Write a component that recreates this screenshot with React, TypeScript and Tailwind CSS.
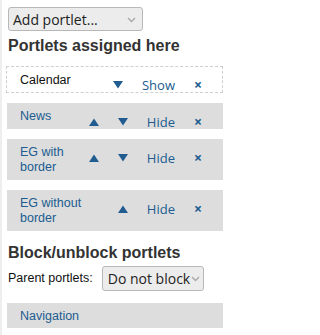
import React from 'react'

type Portlet = {
  name: string
  up?: boolean
  down?: boolean
  action: 'Show' | 'Hide'
}

const portlets: Portlet[] = [
  { name: 'Calendar', down: true, action: 'Show' },
  { name: 'News', up: true, down: true, action: 'Hide' },
  { name: 'EG with border', up: true, down: true, action: 'Hide' },
  { name: 'EG without border', up: true, action: 'Hide' },
]

const ArrowUp = () => (
  <svg width="10" height="8" viewBox="0 0 10 8" className="block">
    <path d="M5 0.5L10 8H0z" fill="#205c90" />
  </svg>
)

const ArrowDown = () => (
  <svg width="10" height="8" viewBox="0 0 10 8" className="block">
    <path d="M0 0H10L5 7.5z" fill="#205c90" />
  </svg>
)

const Chevron = () => (
  <svg width="9" height="6" viewBox="0 0 9 6" className="block">
    <path d="M1 1L4.5 4.5L8 1" fill="none" stroke="#a8a8a8" strokeWidth="1.4" />
  </svg>
)

function PortletRow({ item }: { item: Portlet }) {
  const hidden = item.action === 'Show'
  return (
    <div
      className={
        hidden
          ? 'flex items-start border border-dashed border-[#cfcfcf] bg-white pl-[13px] pr-[20px]'
          : 'ml-px flex items-start bg-[#dddddd] pl-[13px] pr-[21px]'
      }
    >
      <div
        className={`min-w-0 flex-1 text-[12.5px] leading-[15px] font-['Liberation_Sans',Arial,sans-serif] ${
          hidden ? 'pt-[6px] pb-[4px] text-[#111111]' : 'pt-[6px] pb-[5px] text-[#205c90]'
        }`}
      >
        {item.name}
      </div>
      <div
        className={`ml-[10px] flex h-[14px] shrink-0 items-center gap-[19px] text-[#205c90] font-['Open_Sans',sans-serif] ${
          hidden ? 'mt-[11px]' : 'mt-[12px]'
        }`}
      >
        {item.up && <ArrowUp />}
        {item.down && <ArrowDown />}
        <span className="text-[13px] leading-[14px]">{item.action}</span>
        <span className="text-[14px] leading-[14px] font-bold">×</span>
      </div>
    </div>
  )
}

export default function App() {
  return (
    <div className="min-h-[335px] w-[233px] border-l-2 border-[#eeeeee] bg-white pt-[7px] pl-[4px] pr-[10px] font-['Liberation_Sans',Arial,sans-serif]">
      <div className="ml-[2px] flex h-[24px] w-[135px] items-center justify-between rounded-[3px] border border-[#b8b8b8] bg-[#ececec] pl-[4px] pr-[6px] pt-[1px]">
        <span className="text-[14px] leading-[18px] text-[#222222] font-['Open_Sans',sans-serif]">Add portlet...</span>
        <Chevron />
      </div>

      <h2 className="mt-[5px] ml-[2px] text-[16px] leading-[20px] font-bold text-[#333333]">Portlets assigned here</h2>

      <div className="mt-[10px] flex flex-col gap-[10px]">
        {portlets.map((p) => (
          <PortletRow key={p.name} item={p} />
        ))}
      </div>

      <h2 className="mt-[12px] ml-[2px] text-[16px] leading-[20px] font-bold text-[#333333]">Block/unblock portlets</h2>

      <div className="mt-[3px] ml-[2px] flex items-center gap-[9px]">
        <span className="text-[12.5px] text-[#111111]">Parent portlets:</span>
        <div className="flex h-[25px] w-[102px] items-center gap-[1px] rounded-[3px] border border-[#b8b8b8] bg-[#ececec] pl-[5px] pt-[1px]">
          <span className="text-[14px] leading-[18px] text-[#222222] font-['Open_Sans',sans-serif]">Do not block</span>
          <Chevron />
        </div>
      </div>

      <div className="mt-[12px] ml-px bg-[#dddddd] pl-[13px] pt-[6px] pb-[4px] text-[12.5px] leading-[15px] text-[#205c90]">
        Navigation
      </div>
    </div>
  )
}
